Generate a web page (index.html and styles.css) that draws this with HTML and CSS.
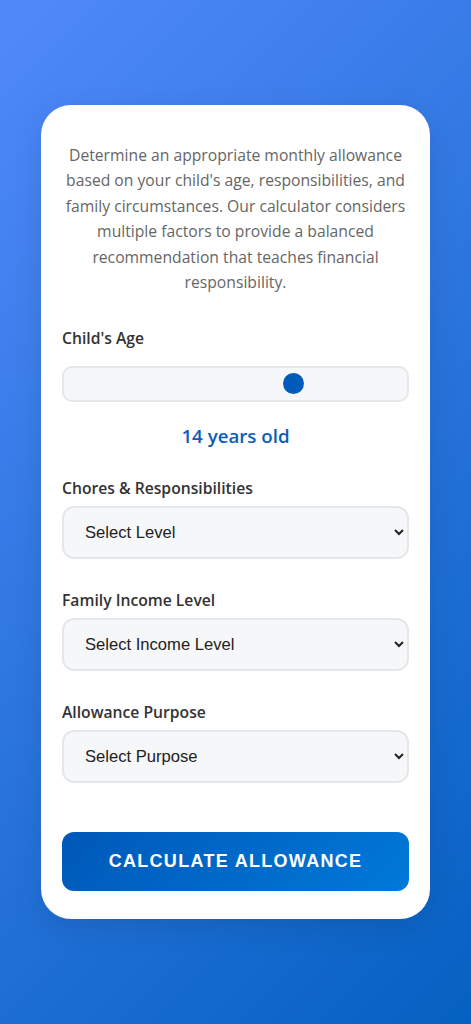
FILE: index.html
```html
<!DOCTYPE html>
<html lang="en">
<head>
    <meta charset="UTF-8">
    <meta name="viewport" content="width=device-width, initial-scale=1.0">
    <title>Allowance Calculator</title>
    <link rel="stylesheet" href="styles.css">
</head>
<body>

    <div class="page">
        <div class="calc-card">
            <p class="intro">
                Determine an appropriate monthly allowance based on your child's age, responsibilities, and family circumstances. Our calculator considers multiple factors to provide a balanced recommendation that teaches financial responsibility.
            </p>

            <div class="field">
                <label for="age">Child's Age</label>
                <input type="range" id="age" min="5" max="18" value="14">
                <div class="age-value" id="age-value">14 years old</div>
            </div>

            <div class="field">
                <label for="chores">Chores &amp; Responsibilities</label>
                <select id="chores">
                    <option value="">Select Level</option>
                    <option value="low">Light</option>
                    <option value="medium">Moderate</option>
                    <option value="high">Heavy</option>
                </select>
            </div>

            <div class="field">
                <label for="income">Family Income Level</label>
                <select id="income">
                    <option value="">Select Income Level</option>
                    <option value="low">Low</option>
                    <option value="middle">Middle</option>
                    <option value="high">High</option>
                </select>
            </div>

            <div class="field">
                <label for="purpose">Allowance Purpose</label>
                <select id="purpose">
                    <option value="">Select Purpose</option>
                    <option value="learning">Learning to save</option>
                    <option value="spending">Personal spending</option>
                    <option value="both">Both</option>
                </select>
            </div>

            <button class="btn" id="calc-button">Calculate Allowance</button>
        </div>
    </div>

    <script>
        const age = document.getElementById('age');
        const ageValue = document.getElementById('age-value');

        age.addEventListener('input', () => {
            ageValue.textContent = age.value + ' years old';
        });
    </script>
</body>
</html>
```

FILE: styles.css
```css
* {
    box-sizing: border-box;
}

body {
    font-family: "Open Sans", "Noto Sans", sans-serif;
    margin: 0;
    min-height: 100vh;
    background: linear-gradient(135deg, #5189fb 0%, #0561c1 100%);
    display: flex;
    align-items: center;
    justify-content: center;
}

.page {
    width: 100%;
    padding: 0 41px;
}

.calc-card {
    background: #ffffff;
    border-radius: 30px;
    padding: 38px 21px 28px;
    box-shadow: 0 8px 30px rgba(0, 0, 0, 0.1);
}

.intro {
    margin: 0 0 31px;
    text-align: center;
    color: #666;
    font-size: 15.7px;
    line-height: 25.5px;
}

.field {
    margin-bottom: 30px;
}

label {
    display: block;
    font-size: 15.7px;
    font-weight: 600;
    color: #333;
    margin-bottom: 7px;
}

/* Age slider */
input[type="range"] {
    -webkit-appearance: none;
    appearance: none;
    display: block;
    width: 100%;
    height: 36px;
    margin: 17px 0 0;
    padding: 0 10px;
    background: #f6f7f9;
    border: 2px solid #e5e7eb;
    border-radius: 10px;
    outline: none;
}
input[type="range"]::-webkit-slider-thumb {
    -webkit-appearance: none;
    width: 21px;
    height: 21px;
    border-radius: 50%;
    background: #005bbb;
    cursor: pointer;
}

.age-value {
    text-align: center;
    margin-top: 23px;
    font-size: 18.7px;
    line-height: 1.2;
    font-weight: 600;
    color: #0a5dbb;
}

select {
    display: block;
    width: 100%;
    height: 53px;
    padding: 0 14px 0 17px;
    font-family: "Liberation Sans", Arial, sans-serif;
    font-size: 16.6px;
    color: #222;
    background-color: #f6f7f9;
    border: 2px solid #e5e7eb;
    border-radius: 12px;
}

.btn {
    display: block;
    width: 100%;
    height: 59px;
    margin-top: 49px;
    border: none;
    border-radius: 12px;
    background: linear-gradient(135deg, #0058b8 0%, #0079d8 100%);
    color: #fff;
    font-family: "Liberation Sans", Arial, sans-serif;
    font-size: 18px;
    font-weight: 700;
    letter-spacing: 1.3px;
    text-transform: uppercase;
    cursor: pointer;
}
```
